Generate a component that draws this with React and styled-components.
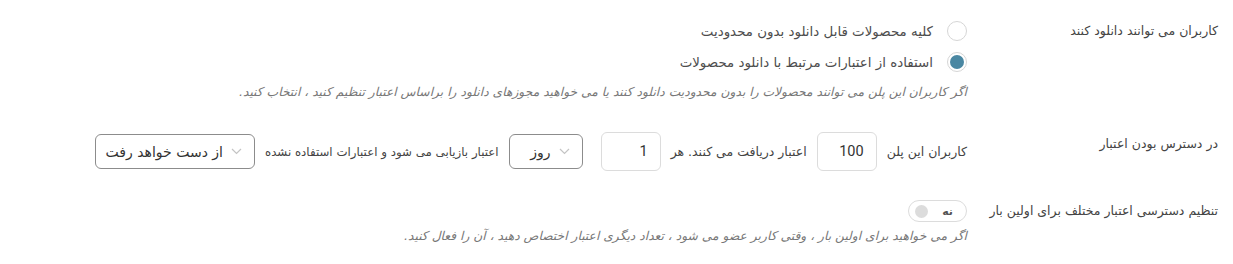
import React, { useState } from 'react'
import styled, { createGlobalStyle } from 'styled-components'

const GlobalStyle = createGlobalStyle`
  html, body {
    margin: 0;
    padding: 0;
    background: #fff;
  }
  body {
    font-family: "DejaVu Sans", "Noto Sans", sans-serif;
    color: #444;
  }
`

const Form = styled.div`
  direction: rtl;
  width: 1233px;
  padding: 21px 15px 0 0;
  box-sizing: border-box;
`

const Row = styled.div`
  display: grid;
  grid-template-columns: 251px 1fr;
  margin-bottom: ${p => p.$gap || 0}px;
`

const Label = styled.div`
  font-size: 12.5px;
  color: #444;
  line-height: 20px;
  padding-top: ${p => p.$top || 0}px;
`

const Field = styled.div`
  display: flex;
  flex-direction: column;
  align-items: flex-start;
`

const RadioList = styled.div`
  display: flex;
  flex-direction: column;
  gap: 11px;
`

const RadioItem = styled.label`
  display: flex;
  align-items: center;
  gap: 14px;
  font-size: 13.4px;
  color: #4d4d4d;
  cursor: pointer;
`

const RadioCircle = styled.span`
  width: 20px;
  height: 20px;
  box-sizing: border-box;
  border-radius: 50%;
  border: 1px solid #d6d6d6;
  display: flex;
  align-items: center;
  justify-content: center;
  &::after {
    content: '';
    width: 14px;
    height: 14px;
    border-radius: 50%;
    background: ${p => (p.$checked ? '#4a87a2' : 'transparent')};
  }
`

const Hint = styled.div`
  font-size: 12.3px;
  font-style: italic;
  color: #777;
  margin-top: ${p => p.$top || 0}px;
  line-height: 16px;
`

const Inline = styled.div`
  display: flex;
  align-items: center;
  gap: 10px;
  font-size: 12.5px;
  color: #444;
`

const Text = styled.span`
  white-space: nowrap;
  font-size: ${p => p.$size || 12.5}px;
`

const NumInput = styled.input`
  width: 60px;
  height: 39px;
  box-sizing: border-box;
  border: 1px solid #dcdcdc;
  border-radius: 6px;
  padding: 0 12px;
  font-family: Roboto, sans-serif;
  font-size: 14.5px;
  color: #333;
  direction: rtl;
  text-align: right;
  outline: none;
`

const Select = styled.div`
  width: ${p => p.$w}px;
  height: 35px;
  box-sizing: border-box;
  border: 1px solid #8c8c8c;
  border-radius: 6px;
  display: flex;
  align-items: center;
  gap: 8px;
  padding-right: 12px;
  font-size: 14px;
  color: #333;
  margin-right: ${p => p.$mr || 0}px;
`

const Chevron = () => (
  <svg width="11" height="7" viewBox="0 0 11 7" fill="none">
    <path d="M1 1l4.5 4.5L10 1" stroke="#c4c4c4" strokeWidth="1.2" />
  </svg>
)

const Toggle = styled.div`
  width: 59px;
  height: 22px;
  box-sizing: border-box;
  border: 1px solid #dcdcdc;
  border-radius: 11px;
  display: flex;
  align-items: center;
  justify-content: space-between;
  padding: 0 13px 0 6px;
  font-size: 11px;
  font-weight: bold;
  color: #555;
`

const Knob = styled.span`
  width: 13px;
  height: 13px;
  border-radius: 50%;
  background: #dcdcdc;
`

export default function App() {
  const [mode, setMode] = useState(1)
  const options = [
    'کلیه محصولات قابل دانلود بدون محدودیت',
    'استفاده از اعتبارات مرتبط با دانلود محصولات',
  ]
  return (
    <>
      <GlobalStyle />
      <Form>
        <Row $gap={32}>
          <Label>کاربران می توانند دانلود کنند</Label>
          <Field>
            <RadioList>
              {options.map((o, i) => (
                <RadioItem key={i} onClick={() => setMode(i)}>
                  <RadioCircle $checked={mode === i} />
                  {o}
                </RadioItem>
              ))}
            </RadioList>
            <Hint $top={12}>
              اگر کاربران این پلن می توانند محصولات را بدون محدودیت دانلود کنند یا می خواهید مجوزهای دانلود را براساس اعتبار تنظیم کنید ، انتخاب کنید.
            </Hint>
          </Field>
        </Row>
        <Row $gap={29}>
          <Label $top={2}>در دسترس بودن اعتبار</Label>
          <Inline>
            <Text>کاربران این پلن</Text>
            <NumInput defaultValue="100" />
            <Text>اعتبار دریافت می کنند. هر</Text>
            <NumInput defaultValue="1" />
            <Select $w={74} $mr={8}>
              <Chevron />
              روز
            </Select>
            <Text $size={11.8}>اعتبار بازیابی می شود و اعتبارات استفاده نشده</Text>
            <Select $w={160}>
              <Chevron />
              از دست خواهد رفت
            </Select>
          </Inline>
        </Row>
        <Row>
          <Label $top={1}>تنظیم دسترسی اعتبار مختلف برای اولین بار</Label>
          <Field>
            <Toggle>
              نه
              <Knob />
            </Toggle>
            <Hint $top={6}>
              اگر می خواهید برای اولین بار ، وقتی کاربر عضو می شود ، تعداد دیگری اعتبار اختصاص دهید ، آن را فعال کنید.
            </Hint>
          </Field>
        </Row>
      </Form>
    </>
  )
}
